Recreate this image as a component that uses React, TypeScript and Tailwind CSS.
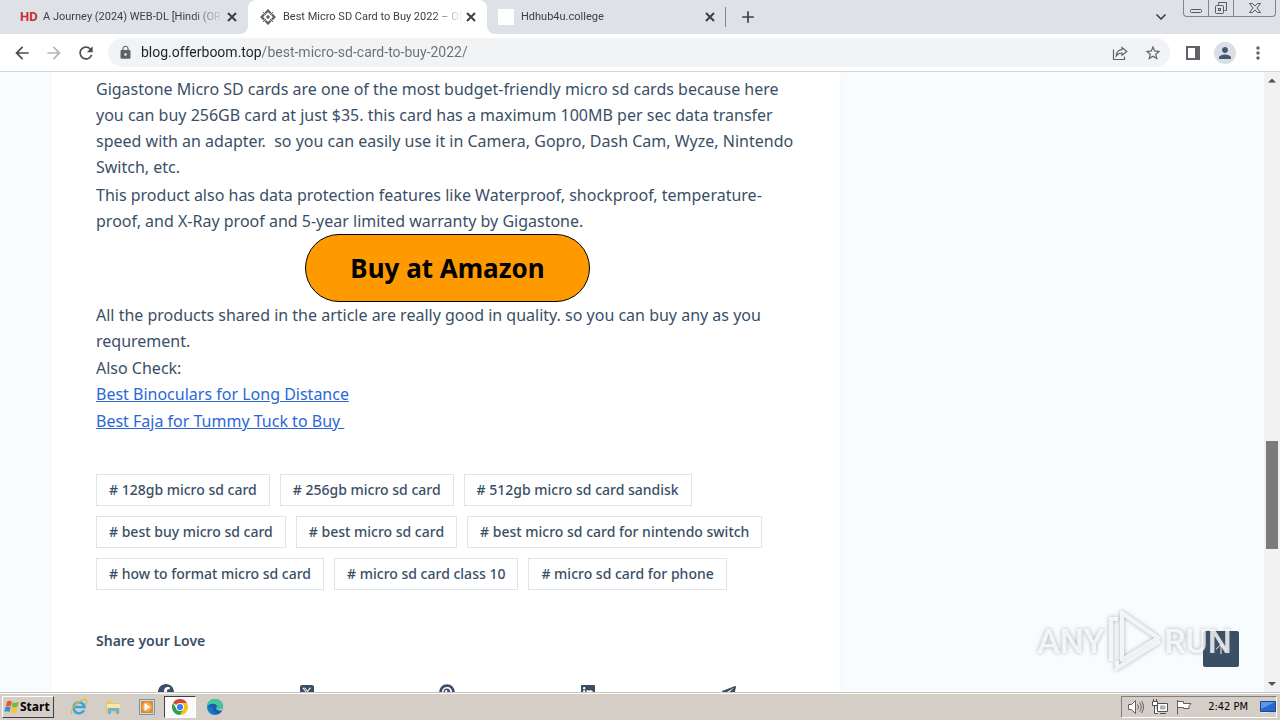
import { useState } from 'react';
import {
  MdAdd,
  MdArrowBack,
  MdArrowForward,
  MdLock,
  MdMoreVert,
  MdPerson,
  MdRefresh,
  MdStarBorder,
} from 'react-icons/md';
import { FaFacebook, FaLinkedin, FaPinterest, FaSquareXTwitter } from 'react-icons/fa6';
import { FaTelegramPlane } from 'react-icons/fa';
import { ArrowUp, ChevronDown } from 'lucide-react';

const tags = [
  '128gb micro sd card',
  '256gb micro sd card',
  '512gb micro sd card sandisk',
  'best buy micro sd card',
  'best micro sd card',
  'best micro sd card for nintendo switch',
  'how to format micro sd card',
  'micro sd card class 10',
  'micro sd card for phone',
];

const shareLinks = [
  { label: 'Facebook', Icon: FaFacebook },
  { label: 'X', Icon: FaSquareXTwitter },
  { label: 'Pinterest', Icon: FaPinterest },
  { label: 'LinkedIn', Icon: FaLinkedin },
  { label: 'Telegram', Icon: FaTelegramPlane },
];

const OfferBoomIcon = () => (
  <svg viewBox="0 0 16 16" className="size-4 shrink-0" fill="#5f6368">
    <path d="M8 0 11.500 3.500 10 5 8 3.200 6 5 4.500 3.500ZM8 16l3.500-3.500L10 11l-2 1.800L6 11l-1.500 1.500ZM0 8l3.500-3.500L5 6 3.200 8 5 10l-1.500 1.500ZM16 8l-3.500-3.500L11 6l1.800 2L11 10l1.500 1.500Z" />
    <circle cx="8" cy="8" r="1.800" />
    <path d="m3 3 3 3M13 3l-3 3M3 13l3-3M13 13l-3-3" stroke="#5f6368" />
  </svg>
);

const TabBody = ({ icon, title }: { icon: React.ReactNode; title: string }) => (
  <>
    <button role="tab" className="flex min-w-0 flex-1 items-center gap-[7px] text-left">
      {icon}
      <span className="whitespace-nowrap [mask-image:linear-gradient(to_right,#000_150px,transparent_180px)]">
        {title}
      </span>
    </button>
    <button aria-label="Close tab" className="text-[#3c4043]">
      <svg viewBox="0 0 14 14" className="size-[14px]" stroke="currentColor" strokeWidth="2">
        <path d="m3 3 8 8M11 3l-8 8" />
      </svg>
    </button>
  </>
);

const TabStrip = () => (
  <div role="tablist" className="flex h-[34px] text-[11px] text-[#3c4043]">
    <div className="w-[248px] bg-white">
      <div className="flex h-full items-center rounded-br-lg bg-[#dee1e6] pr-[9px] pl-5">
        <TabBody
          icon={<span className="w-4 text-center text-[13px] font-bold text-[#c62f35]">HD</span>}
          title="A Journey (2024) WEB-DL [Hindi (OR"
        />
      </div>
    </div>
    <div className="w-[239px] bg-[#dee1e6]">
      <div className="flex h-full items-center rounded-t-lg bg-white pr-[9px] pl-3">
        <TabBody icon={<OfferBoomIcon />} title="Best Micro SD Card to Buy 2022 – Of" />
      </div>
    </div>
    <div className="flex-1 bg-white">
      <div className="flex h-full items-center rounded-bl-lg bg-[#dee1e6]">
        <div className="flex h-5 w-[239px] items-center border-r border-[#80868b] pr-2 pl-[11px]">
          <TabBody icon={<span className="size-4 bg-white" />} title="Hdhub4u.college" />
        </div>
        <button aria-label="New tab" className="ml-3">
          <MdAdd className="size-5" />
        </button>
        <button aria-label="Search tabs" className="mr-[14px] ml-auto">
          <ChevronDown className="size-4" strokeWidth={2.5} />
        </button>
        <div className="mr-1 flex h-[17px] self-start rounded-b border border-t-0 border-[#80848c] text-[#55585e]">
          <button aria-label="Minimize" className="flex w-[25px] items-center justify-center border-r border-[#80848c]">
            <svg viewBox="0 0 12 14" className="h-[14px] w-3" fill="none" stroke="currentColor">
              <rect x=".5" y="8.500" width="11" height="3" rx="1" />
            </svg>
          </button>
          <button aria-label="Restore" className="flex w-[25px] items-center justify-center border-r border-[#80848c]">
            <svg viewBox="0 0 14 14" className="size-[14px]" fill="none" stroke="currentColor">
              <path d="M4.500 3.500v-2h8v8h-2" />
              <rect x="1.500" y="4.500" width="8" height="8" rx="1" />
              <rect x="4.500" y="7.500" width="2" height="2" />
            </svg>
          </button>
          <button aria-label="Close window" className="flex w-[41px] items-center justify-center">
            <svg viewBox="0 0 14 12" className="h-3 w-[14px]" fill="none" stroke="currentColor">
              <path d="M1.500 1.500h3L7 4l2.500-2.500h3L9 6l3.500 4.500h-3L7 8l-2.500 2.500h-3L5 6Z" />
            </svg>
          </button>
        </div>
      </div>
    </div>
  </div>
);

const Toolbar = () => {
  const [url, setUrl] = useState('blog.offerboom.top/best-micro-sd-card-to-buy-2022/');

  return (
    <div className="flex h-[38px] items-center border-b border-[#d5d7da] bg-white px-3 text-[#5f6368]">
      <button aria-label="Back" className="mr-3 text-[#4a4d51]">
        <MdArrowBack className="size-5" />
      </button>
      <button aria-label="Forward" className="mr-3 text-[#b4b6b9]">
        <MdArrowForward className="size-5" />
      </button>
      <button aria-label="Reload" className="mr-3 text-[#4a4d51]">
        <MdRefresh className="size-5" />
      </button>
      <div className="flex h-[29px] flex-1 items-center rounded-full bg-[#f1f3f4] pr-2 pl-[10px]">
        <MdLock className="mr-2 size-[15px]" />
        <input
          aria-label="Address"
          value={url}
          onChange={(e) => setUrl(e.target.value)}
          className="min-w-0 flex-1 bg-[linear-gradient(to_right,#202124_120px,#6b6f74_120px)] bg-clip-text text-[14px] text-transparent outline-none"
        />
        <button aria-label="Share this page" className="mr-4">
          <svg viewBox="0 0 16 16" className="size-4" fill="none" stroke="currentColor" strokeWidth="1.200">
            <path d="M1.500 4.500v10h11v-3" />
            <path d="M10 2.500 14.800 6.500 10 10.200V8C7.500 8 5.700 8.800 4.300 10.800 4.600 7.300 6.500 5 10 4.700Z" />
          </svg>
        </button>
        <button aria-label="Bookmark this tab">
          <MdStarBorder className="size-[18px]" />
        </button>
      </div>
      <button aria-label="Side panel" className="ml-4">
        <svg viewBox="0 0 14 14" className="size-[14px]" fill="currentColor">
          <path d="M0 0h14v14H0ZM2 2v10h7V2Z" fillRule="evenodd" />
        </svg>
      </button>
      <button
        aria-label="Profile"
        className="ml-[14px] flex size-[22px] items-center justify-center rounded-full bg-[#dadfe6] text-[#47566e]"
      >
        <MdPerson className="size-[18px]" />
      </button>
      <button aria-label="Menu" className="ml-3">
        <MdMoreVert className="size-5" />
      </button>
    </div>
  );
};

const Article = () => (
  <article className="ml-13 w-full max-w-[788px] bg-white pt-1 pr-[41px] pl-11 text-base leading-[26px] text-[#3a4f66] shadow-[0_0_6px_rgba(0,0,0,0.02)]">
    <p>
      Gigastone Micro SD cards are one of the most budget-friendly micro sd cards because here you can buy 256GB card
      at just $35. this card has a maximum 100MB per sec data transfer speed with an adapter.&nbsp; so you can easily
      use it in Camera, Gopro, Dash Cam, Wyze, Nintendo Switch, etc.
    </p>
    <p className="mt-0.5">
      This product also has data protection features like Waterproof, shockproof, temperature-proof, and X-Ray proof
      and 5-year limited warranty by Gigastone.
    </p>
    <div className="flex justify-center">
      <button className="h-[68px] rounded-full border border-black bg-[#ff9900] px-11 text-[26px] font-bold text-black">
        Buy at Amazon
      </button>
    </div>
    <p>All the products shared in the article are really good in quality. so you can buy any as you requrement.</p>
    <p className="mt-px">Also Check:</p>
    <p>
      <a href="#binoculars" className="text-[#2b67d8] underline">
        Best Binoculars for Long Distance
      </a>
    </p>
    <p className="mt-px">
      <a href="#faja" className="text-[#2b67d8] underline">
        Best Faja for Tummy Tuck to Buy&nbsp;
      </a>
    </p>

    <div className="mt-10 flex flex-wrap gap-[10px] text-sm font-medium">
      {tags.map((tag) => (
        <a key={tag} href="#tag" className="flex h-8 items-center border border-[#e0e5eb] px-3">
          # {tag}
        </a>
      ))}
    </div>

    <h2 className="mt-[38px] text-sm leading-[26px] font-semibold">Share your Love</h2>
    <div className="mt-[30px] grid grid-cols-5">
      {shareLinks.map(({ label, Icon }) => (
        <a key={label} href="#share" aria-label={label} className="flex justify-center">
          <Icon className="size-4" />
        </a>
      ))}
    </div>
  </article>
);

const ScrollBar = () => (
  <div className="flex w-4 shrink-0 flex-col items-center bg-[#f1f1f1] text-[#505050]">
    <svg viewBox="0 0 16 16" className="size-4" fill="currentColor">
      <path d="M4 10.500 8 6.500l4 4Z" />
    </svg>
    <div className="flex-[353]" />
    <div className="w-3 flex-[108] bg-[#7b7b7b]" />
    <div className="flex-[127]" />
    <svg viewBox="0 0 16 16" className="size-4" fill="currentColor">
      <path d="m4 6 4 4 4-4Z" />
    </svg>
  </div>
);

const Watermark = () => (
  <div className="pointer-events-none absolute right-8 bottom-[18px] flex items-center font-['Roboto',sans-serif] text-[34px] font-medium text-white/80 [filter:drop-shadow(0_0_2px_rgba(90,95,100,0.6))]">
    <span>ANY</span>
    <svg viewBox="0 0 60 66" className="h-[66px] w-[60px]" fill="none" stroke="currentColor" strokeWidth="4">
      <path d="M18 5v47l36-22Z" strokeLinejoin="round" />
      <path d="M14 11H7v42M13 53v7l43-27" />
    </svg>
    <span>RUN</span>
  </div>
);

const Taskbar = () => (
  <footer className="flex h-7 shrink-0 items-center border-t border-[#c9c5be] bg-[#d4cec6] pr-[3px] pl-0.5 font-['DejaVu_Sans_Condensed','DejaVu_Sans',sans-serif] text-[11px] text-black shadow-[inset_0_1px_0_#fff]">
    <button className="flex h-[22px] w-[52px] items-center border border-t-white border-r-[#404040] border-b-[#404040] border-l-white pl-px font-['Open_Sans',sans-serif] text-xs font-bold">
      <svg viewBox="0 0 16 16" className="size-4 shrink-0">
        <path d="M3 2.500Q5.500 1 8 2.800L6.800 7.500Q4.500 6 1.800 7.200Z" fill="#e8592b" />
        <path d="M8.800 3.200Q11.500 4.500 14.800 3L13.500 7.800Q10.500 9 7.600 7.800Z" fill="#7fb539" />
        <path d="M1.600 8Q4.200 6.900 6.600 8.400L5.400 13Q3 11.500.3 12.800Z" fill="#3e87d2" />
        <path d="M7.400 8.600q3 1.300 5.900.100L12 13.400q-3 1.200-5.800-.1Z" fill="#f8c433" />
      </svg>
      Start
    </button>
    <nav className="ml-2 flex items-center" aria-label="Quick launch">
      <button aria-label="Internet Explorer" className="flex w-[34px] justify-center">
        <svg viewBox="0 0 18 18" className="size-[18px]" fill="none">
          <path d="M14 12.200A5.500 5.500 0 1 1 14.500 9H4.500" stroke="#36a6dc" strokeWidth="2.600" />
          <path d="M2 16C-1 13 7 2 15 1.500c3 0 1.500 3.500.5 5" stroke="#e7b93c" strokeWidth="1.300" />
        </svg>
      </button>
      <button aria-label="File Explorer" className="flex w-[34px] justify-center">
        <svg viewBox="0 0 16 16" className="size-4">
          <path d="M1 2h5l1 2h8v10H1Z" fill="#e9c867" />
          <path d="M2 5h13v4H2Z" fill="#f9e8a5" />
          <path d="M3 15V9h11v6h-3v-3H6v3Z" fill="#6db3d8" />
        </svg>
      </button>
      <button aria-label="Media Player" className="flex w-[34px] justify-center">
        <svg viewBox="0 0 16 16" className="size-4">
          <path d="M.5.500h15v15H.500Z" fill="#c5def0" stroke="#5f9bc7" />
          <path d="M2 2h12v12H2Z" fill="#ee8318" />
          <circle cx="8" cy="8" r="5" fill="#f7a648" />
          <path d="M5.500 4v8L11.500 8Z" fill="#fff" />
        </svg>
      </button>
      <button
        aria-label="Google Chrome"
        className="flex h-[22px] w-8 items-center justify-center border border-t-[#404040] border-r-white border-b-white border-l-[#404040] bg-[#fbfaf9]"
      >
        <svg viewBox="0 0 16 16" className="size-4">
          <path d="M8 8 1.070 4A8 8 0 0 1 14.930 4H8Z" fill="#dc4437" />
          <path d="M8 8V4h6.930A8 8 0 0 1 8 16l3.460-6Z" fill="#fbc116" />
          <path d="M8 8 11.460 10 8 16A8 8 0 0 1 1.070 4L4.540 10Z" fill="#2d9f52" />
          <circle cx="8" cy="8" r="4" fill="#fff" />
          <circle cx="8" cy="8" r="3.100" fill="#3c7fea" />
        </svg>
      </button>
      <button aria-label="Microsoft Edge" className="flex w-[38px] justify-center">
        <svg viewBox="0 0 16 16" className="size-4">
          <circle cx="8" cy="8" r="8" fill="#1679c8" />
          <path d="M0 8A8 8 0 0 1 16 7.500c0 3-4.500 3.800-6 2.500C12 6 6 3.500 0 8Z" fill="#43c5a0" />
          <path d="M0 8C3 3.500 10 4 10 8c-1 1-1 4 5 3.500-3 5.500-9 3-9-1C6 8 3 6.500 0 8Z" fill="#1b5cab" />
          <path d="M10 8c-1.500 1.200-.5 4.200 5 3.200l1-2.200c-2 1.800-5 1.500-6 1Z" fill="#d4cec6" />
        </svg>
      </button>
    </nav>
    <div className="ml-auto flex h-[22px] items-center border border-t-[#808080] border-r-white border-b-white border-l-[#808080] pl-[6px]">
      <svg viewBox="0 0 16 16" className="mr-2 size-4" fill="#fff" stroke="#606060">
        <path d="M.5 5.500h3l4-4v13l-4-4h-3Z" />
        <path d="M9.500 5.500q2 2.500 0 5M11.500 3.500q3.500 4.500 0 9M13.500 2q4 6 0 12" fill="none" />
      </svg>
      <svg viewBox="0 0 16 16" className="mr-2 size-4" fill="#fff" stroke="#505050">
        <path d="M5.500 4.500h10v8h-10ZM8 14.500h6M2.500 6v8.500H6" />
        <path d="M.5 2.500h5v4h-5ZM1.500 0v2M4.500 0v2" />
        <path d="M8 6.500h5.500v4H8Z" fill="#b0b0b0" stroke="none" />
      </svg>
      <svg viewBox="0 0 16 16" className="mr-4 size-4" fill="#fff" stroke="#606060">
        <path d="M1.500 1v14.500M1.500 2.500h6v2h7.500l-2 2.500 0 2.500H7.500v-1h-6" />
      </svg>
      <time className="pt-0.5">2:42 PM</time>
      <svg viewBox="0 0 16 14" className="ml-3 h-[14px] w-4">
        <path d="M.5 1.500h15v10H.5Z" fill="#2868cf" stroke="#1c478d" />
        <path d="M1 2h14L1 9Z" fill="#5b98ea" />
        <path d="M1 12.500h7" stroke="#dceafa" />
      </svg>
    </div>
  </footer>
);

const App = () => (
  <div className="flex h-screen flex-col overflow-hidden bg-white font-['Noto_Sans',sans-serif]">
    <header className="shrink-0 font-['Roboto',sans-serif]">
      <TabStrip />
      <Toolbar />
    </header>
    <div className="flex min-h-0 flex-1">
      <main className="relative flex min-w-0 flex-1 overflow-hidden bg-[#f9fcfe]">
        <Article />
        <button
          aria-label="Back to top"
          className="absolute right-[25px] bottom-[25px] flex size-9 items-center justify-center rounded-xs bg-[#3a4f66] text-white"
        >
          <ArrowUp className="size-4" strokeWidth={1.5} />
        </button>
        <Watermark />
      </main>
      <ScrollBar />
    </div>
    <Taskbar />
  </div>
);

export default App;
